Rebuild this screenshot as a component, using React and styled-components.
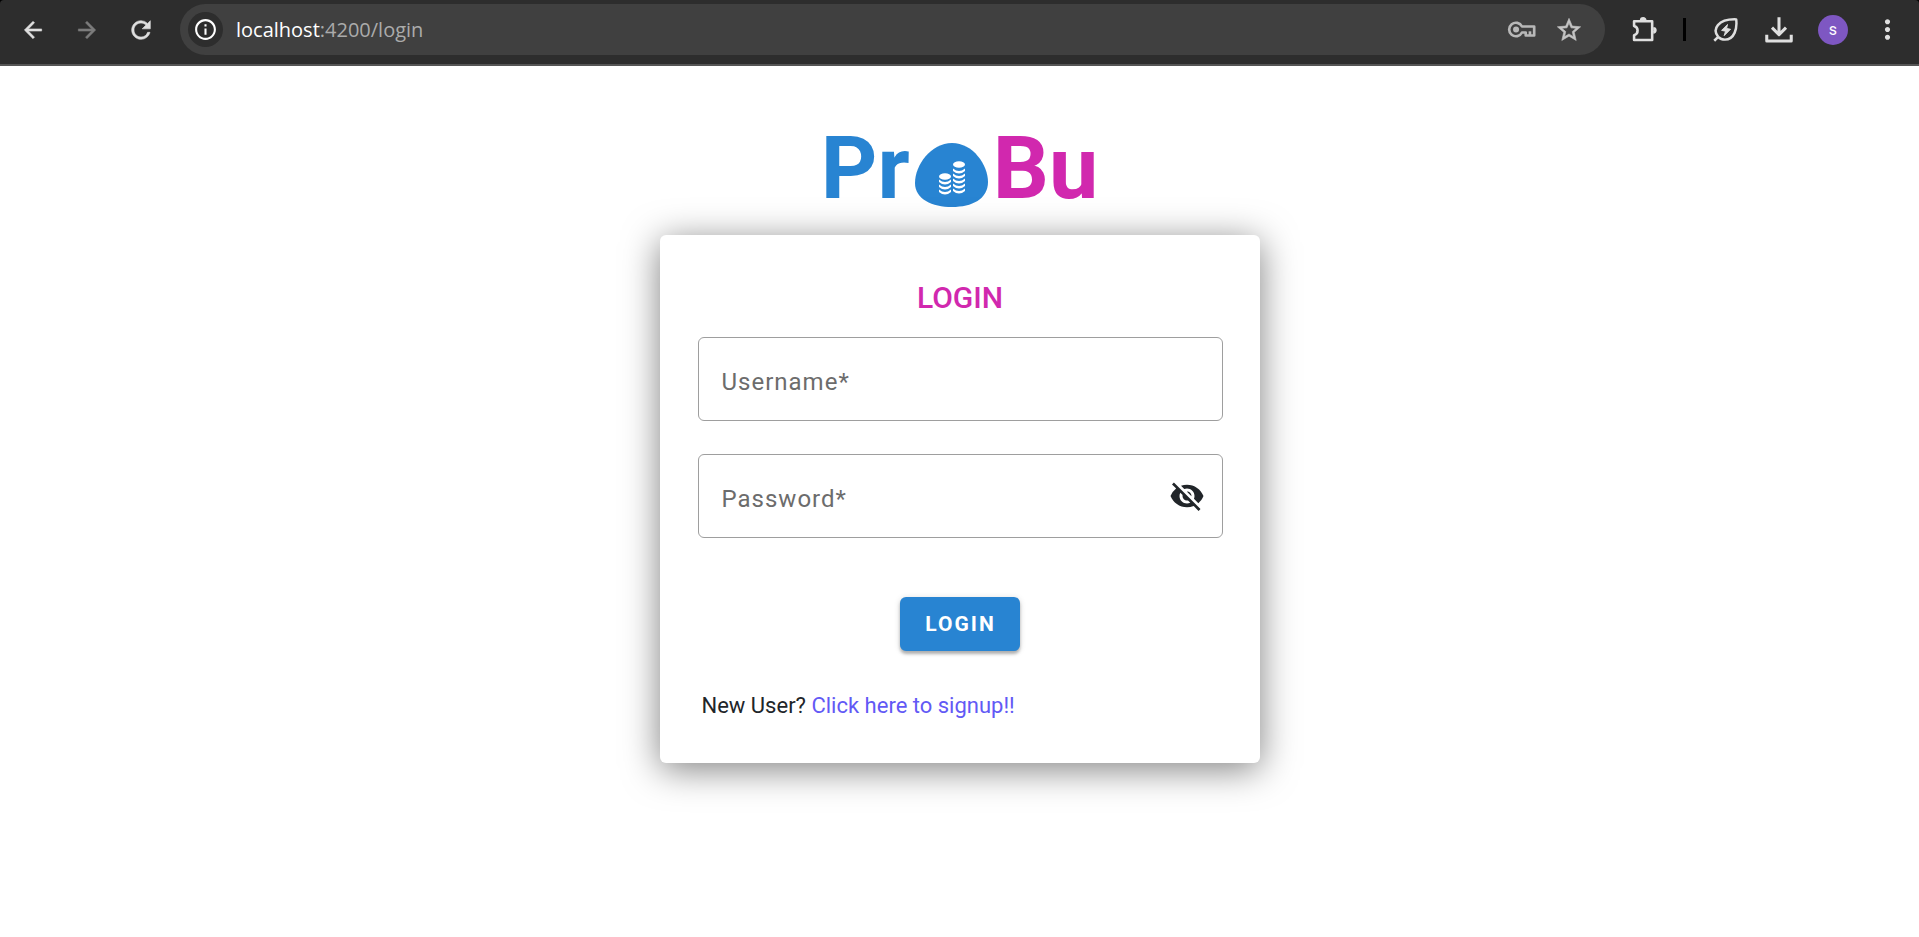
import React, { useState } from 'react';
import styled, { createGlobalStyle } from 'styled-components';
import {
  MdArrowBack,
  MdArrowForward,
  MdRefresh,
  MdInfoOutline,
  MdStarOutline,
  MdMoreVert,
  MdVisibility,
  MdVisibilityOff,
} from 'react-icons/md';

const GlobalStyle = createGlobalStyle`
  * {
    box-sizing: border-box;
  }

  body {
    margin: 0;
    background: #fff;
    color: #212529;
    font-family: Roboto, "Liberation Sans", sans-serif;
  }
`;

const Frame = styled.header`
  background: #000;
`;

const Toolbar = styled.div`
  display: flex;
  align-items: center;
  height: 66px;
  padding: 0 16px 5px;
  background: #2d2d2d;
  border-bottom: 2px solid #555;
  border-radius: 4px 4px 0 0;
`;

const BarButton = styled.button`
  display: flex;
  align-items: center;
  justify-content: center;
  width: ${props => props.$width || 54}px;
  height: 36px;
  padding: 0;
  border: none;
  background: none;
  color: ${props => props.$color || '#dfdfdf'};
  cursor: pointer;

  /* the first path of a Md icon is its empty 24x24 box */
  svg > path {
    stroke: none;
  }

  svg > path:last-child {
    stroke: ${props => (props.$bold ? 'currentColor' : 'none')};
    stroke-width: 0.5;
  }
`;

const NavGroup = styled.nav`
  display: flex;
  width: 164px;
  margin-left: -10px;
`;

const AddressBar = styled.div`
  display: flex;
  flex: 1;
  align-items: center;
  height: 51px;
  margin-left: 10px;
  padding: 0 12px 0 8px;
  background: #404040;
  border-radius: 26px;
`;

const SiteInfo = styled.button`
  display: flex;
  align-items: center;
  justify-content: center;
  width: 35px;
  height: 35px;
  padding: 0;
  border: none;
  border-radius: 50%;
  background: #2d2d2d;
  color: #fff;
`;

const Url = styled.div`
  flex: 1;
  padding-left: 13px;
  font-family: "Open Sans", "Noto Sans", sans-serif;
  font-size: 20px;
  color: #ababab;

  span {
    color: #fff;
  }
`;

const ToolGroup = styled.div`
  display: flex;
  align-items: center;
  margin-left: 12px;
  margin-right: -11px;
`;

const Divider = styled.div`
  width: 3px;
  height: 23px;
  margin: 0 12px;
  background: #000;
`;

const Avatar = styled.span`
  width: 30px;
  height: 30px;
  border-radius: 50%;
  background: #7e57c2;
  color: #fff;
  font-family: Roboto, sans-serif;
  font-size: 16px;
  line-height: 30px;
  text-align: center;
`;

const Page = styled.main`
  display: flex;
  flex-direction: column;
  align-items: center;
  padding: 50px 16px;
`;

const Brand = styled.div`
  display: flex;
  align-items: center;
  height: 104px;
  margin-bottom: 15px;
  font-size: 88px;
  font-weight: 700;
  line-height: 104px;
`;

const BrandPart = styled.span`
  color: ${props => props.$color};
`;

const BrandMark = styled.svg`
  width: 73px;
  height: 64px;
  margin: 14px 5px 0;
`;

const Card = styled.form`
  display: flex;
  flex-direction: column;
  width: 100%;
  max-width: 600px;
  padding: 38px 37px 39px 38px;
  background: #fff;
  border-radius: 6px;
  box-shadow: 0 6px 36px rgba(0, 0, 0, 0.5);
`;

const CardTitle = styled.h1`
  margin: 0 0 14px;
  color: #d128ae;
  font-size: 30px;
  font-weight: 500;
  line-height: 50px;
  text-align: center;
`;

const Field = styled.div`
  position: relative;
  display: flex;
  align-items: center;
  height: 84px;
  margin-bottom: 33px;
  padding: 0 17px 0 24px;
  border: 1px solid #9e9e9e;
  border-radius: 6px;
`;

const FieldLabel = styled.label`
  position: absolute;
  left: 23px;
  top: 28px;
  color: #6c6c6c;
  font-size: 24px;
  line-height: 32px;
  letter-spacing: 1px;
  pointer-events: none;
`;

const FieldInput = styled.input`
  flex: 1;
  min-width: 0;
  height: 100%;
  padding: 0;
  border: none;
  outline: none;
  background: none;
  font: inherit;
  font-size: 24px;
`;

const EyeButton = styled.button`
  display: flex;
  padding: 0;
  border: none;
  background: none;
  color: #212529;
  cursor: pointer;
`;

const SubmitButton = styled.button`
  align-self: center;
  height: 54px;
  margin: 26px 0 36px;
  padding: 0 24px 0 25px;
  border: none;
  border-radius: 6px;
  background: #2884d2;
  color: #fff;
  font-family: inherit;
  font-size: 21px;
  font-weight: 700;
  letter-spacing: 2px;
  box-shadow: 0 3px 3px rgba(0, 0, 0, 0.25), 0 1px 6px rgba(0, 0, 0, 0.15);
  cursor: pointer;
`;

const SignupText = styled.p`
  margin: 0;
  padding-left: 4px;
  font-size: 22px;
  line-height: 37px;

  a {
    color: #6259f5;
    text-decoration: none;
  }
`;

const LineIcon = ({ size, children }) => (
  <svg
    width={size}
    height={size}
    viewBox="0 0 24 24"
    fill="none"
    aria-hidden="true"
  >
    <g stroke="currentColor" strokeWidth="2.2" strokeLinejoin="round">
      {children}
    </g>
  </svg>
);

const coins = (x, top, count) =>
  Array.from({ length: count }, (_, i) => (
    <path
      key={i}
      d={`M${x} ${top + i * 5} q6 5 12 0 v2.6 q-6 5 -12 0z`}
      fill="#fff"
    />
  ));

const Logo = () => (
  <Brand>
    <BrandPart $color="#2884d2">Pr</BrandPart>
    <BrandMark viewBox="0 0 73 64" aria-hidden="true">
      <path d="M37 0C58 0 73 22 73 39C73 56 57 64 37 64C17 64 0 56 0 40C0 22 16 0 37 0Z" fill="#2884d2" />
      <ellipse cx="30" cy="33.5" rx="6" ry="3.2" fill="#fff" />
      <ellipse cx="44" cy="21.5" rx="6" ry="3.2" fill="#fff" />
      {coins(24, 36.5, 3)}
      {coins(38, 25.5, 5)}
    </BrandMark>
    <BrandPart $color="#d128ae">Bu</BrandPart>
  </Brand>
);

const BrowserBar = () => (
  <Frame>
    <Toolbar>
      <NavGroup>
        <BarButton aria-label="Back" $bold><MdArrowBack size={26} /></BarButton>
        <BarButton aria-label="Forward" $color="#7c7c7c" $bold><MdArrowForward size={26} /></BarButton>
        <BarButton aria-label="Reload" $bold><MdRefresh size={28} /></BarButton>
      </NavGroup>
      <AddressBar>
        <SiteInfo aria-label="Site information"><MdInfoOutline size={25} /></SiteInfo>
        <Url><span>localhost</span>:4200/login</Url>
        <BarButton aria-label="Passwords" $width={48} $color="#b8b8b8">
          <LineIcon size={29}>
            <path d="M12.4 9.5A5.6 5.6 0 1 0 12.4 14.5H15.5V17H22.5V9.5Z" />
            <circle cx="7.500" cy="12" r="1.4" fill="currentColor" />
            <path d="M19 13.500V17" />
          </LineIcon>
        </BarButton>
        <BarButton aria-label="Bookmark" $width={48} $color="#c4c4c4" $bold><MdStarOutline size={28} /></BarButton>
      </AddressBar>
      <ToolGroup>
        <BarButton aria-label="Extensions">
          <LineIcon size={28}>
            <path d="M3.500 4.500H19V20.500H3.500V16.500C7.500 15.500 7.500 9.500 3.500 8.500Z" />
            <path d="M9.500 3.800a1.800 1.800 0 0 1 3.600 0M20 10.500a1.800 1.800 0 0 1 0 3.600" fill="currentColor" />
          </LineIcon>
        </BarButton>
        <Divider />
        <BarButton aria-label="Energy saver">
          <LineIcon size={27}>
            <path d="M2 22L5.500 18.500M5.500 18.500C0 12 5 2.500 21.500 3C22.500 11 20 21 11.500 21C9 21 7 20 5.500 18.500" />
            <path d="M13.800 7.500L8.500 12.800L12 13.500L10.800 17.500L16.500 11.800L13 11Z" fill="currentColor" strokeWidth="0.8" />
          </LineIcon>
        </BarButton>
        <BarButton aria-label="Downloads">
          <LineIcon size={28}>
            <path d="M12 1V16M6 10L12 16L18 10M1.500 16V21.500H22.500V16" strokeWidth="2.6" />
          </LineIcon>
        </BarButton>
        <BarButton aria-label="Profile"><Avatar>s</Avatar></BarButton>
        <BarButton aria-label="Menu"><MdMoreVert size={31} /></BarButton>
      </ToolGroup>
    </Toolbar>
  </Frame>
);

const App = () => {
  const [username, setUsername] = useState('');
  const [password, setPassword] = useState('');
  const [hidden, setHidden] = useState(true);

  const handleSubmit = (event) => {
    event.preventDefault();
  };

  return (
    <>
      <GlobalStyle />
      <BrowserBar />
      <Page>
        <Logo />
        <Card onSubmit={handleSubmit}>
          <CardTitle>LOGIN</CardTitle>
          <Field>
            <FieldInput id="username" value={username} onChange={e => setUsername(e.target.value)} />
            {!username && <FieldLabel htmlFor="username">Username*</FieldLabel>}
          </Field>
          <Field>
            <FieldInput
              id="password"
              type={hidden ? 'password' : 'text'}
              value={password}
              onChange={e => setPassword(e.target.value)}
            />
            {!password && <FieldLabel htmlFor="password">Password*</FieldLabel>}
            <EyeButton type="button" aria-label="Toggle password" onClick={() => setHidden(!hidden)}>
              {hidden ? <MdVisibilityOff size={36} /> : <MdVisibility size={36} />}
            </EyeButton>
          </Field>
          <SubmitButton type="submit">LOGIN</SubmitButton>
          <SignupText>
            New User? <a href="#signup">Click here to signup!!</a>
          </SignupText>
        </Card>
      </Page>
    </>
  );
};

export default App;
